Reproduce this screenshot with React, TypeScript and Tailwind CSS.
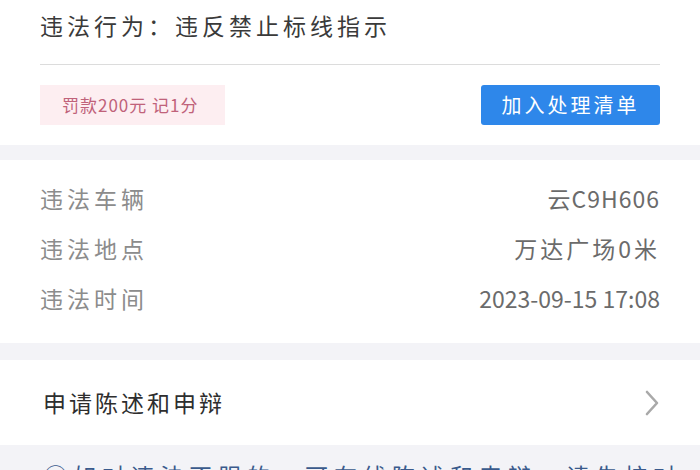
const font = "font-['Noto_Sans_CJK_SC','Noto_Sans',sans-serif]";

function InfoRow({ label, value, spacing }: { label: string; value: string; spacing: string }) {
  return (
    <div className="flex h-[50px] items-center justify-between">
      <span className="text-[23px] tracking-[4px] text-[#8c8c8c]">{label}</span>
      <span className={`text-[23px] text-[#6b6b6b] ${spacing}`}>{value}</span>
    </div>
  );
}

export default function App() {
  return (
    <div className={`${font} h-[470px] w-[700px] overflow-hidden bg-[#f3f3f7]`}>
      <section className="bg-white px-10">
        <div className="h-[65px] border-b border-[#dcdcdc] pt-[9px]">
          <p className="text-[23px] leading-[32px] tracking-[4px] text-[#3a3a3a]">
            违法行为：违反禁止标线指示
          </p>
        </div>
        <div className="flex items-center justify-between py-5">
          <span className="flex h-10 w-[185px] items-center bg-[#fdeef1] pl-[22px] text-[17px] tracking-[1px] text-[#c0627a]">
            罚款200元 记1分
          </span>
          <button className="h-10 w-[179px] rounded-[3px] bg-[#2e87ea] text-[20px] tracking-[3px] text-white">
            加入处理清单
          </button>
        </div>
      </section>

      <section className="mt-[15px] bg-white px-10 pb-[20px] pt-[13px]">
        <InfoRow label="违法车辆" value="云C9H606" spacing="tracking-[1px]" />
        <InfoRow label="违法地点" value="万达广场0米" spacing="tracking-[3px]" />
        <InfoRow label="违法时间" value="2023-09-15 17:08" spacing="tracking-normal" />
      </section>

      <section className="mt-[17px] flex h-[85px] items-center justify-between bg-white pl-[43px] pr-10">
        <span className="text-[23px] tracking-[3px] text-[#2e2e2e]">申请陈述和申辩</span>
        <svg width="16" height="28" viewBox="0 0 16 28" fill="none">
          <path d="M3 3 L13 14 L3 25" stroke="#a9a9a9" strokeWidth="2.6" strokeLinecap="round" strokeLinejoin="round" />
        </svg>
      </section>

      <p className="mt-[14px] whitespace-nowrap pl-[44px] text-[23px] leading-[32px] tracking-[6px] text-[#3a5a8c]">
        ①如对违法不服的，可在线陈述和申辩，请先核对
      </p>
    </div>
  );
}
